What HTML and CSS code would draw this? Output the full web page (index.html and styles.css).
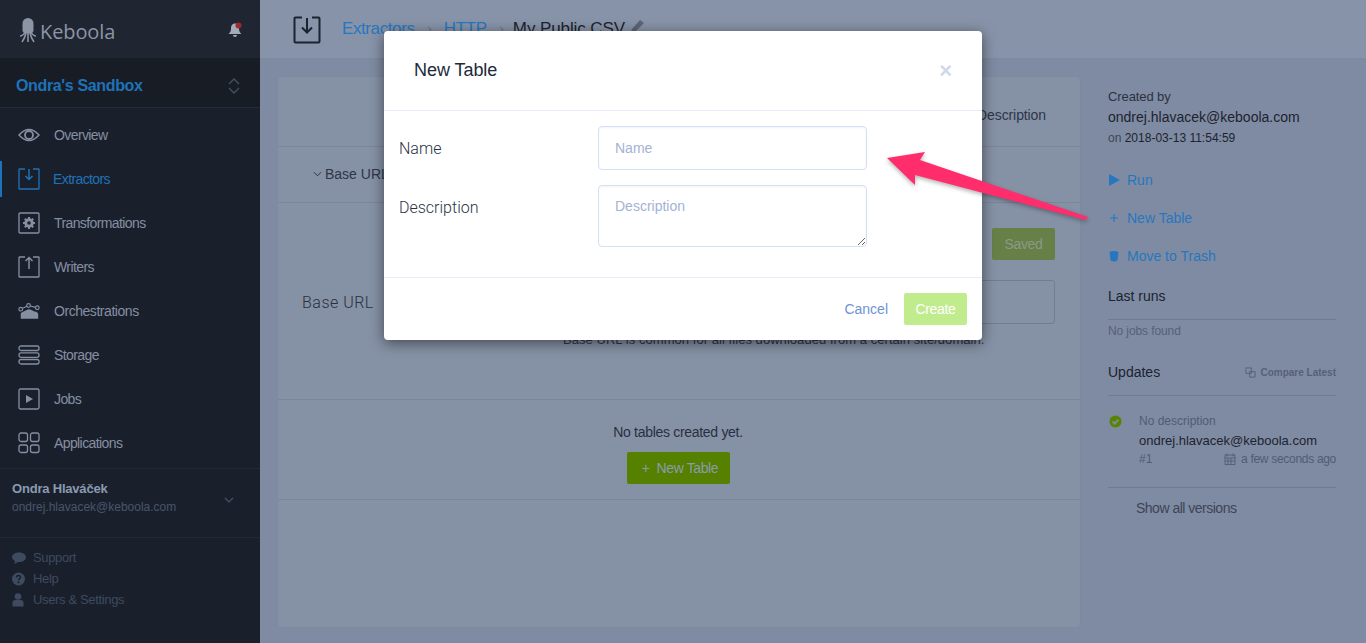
FILE: index.html
```html
<!DOCTYPE html>
<html>
<head>
    <title>My Public CSV - Keboola</title>
    <link rel="stylesheet" href="styles.css">
</head>
<body>
    <div class="page">
        <div class="sidebar">
            <div class="logo-row">
                <div class="logo">
                    <svg class="logo-icon" viewBox="0 0 18 26" width="18" height="26">
                        <path d="M3.500 5.500a5.500 5.500 0 0 1 11 0v7q0 3-5.500 3t-5.500-3z" fill="#8c95a5"/>
                        <path d="M6 14Q4 18 1 18M7 15Q6 20 3 24M9 15v9M11 15q1 5 4 9M12 14q2 4 5 4" stroke="#8c95a5" stroke-width="1.600" fill="none"/>
                    </svg>
                    <span>Keboola</span>
                </div>
                <svg class="bell" viewBox="0 0 16 16" width="16" height="16">
                    <path d="M8 1.500c3 0 4 2.500 4 5 0 3 1 4 2.500 5.500H1.500C3 10.500 4 9.500 4 6.500c0-2.500 1-5 4-5zM6 13h4a2 2 0 0 1-4 0z" fill="#a3abb8"/>
                    <circle cx="11.500" cy="3.500" r="3" fill="#9c2a35"/>
                </svg>
            </div>
            <div class="project">
                <span>Ondra's Sandbox</span>
                <svg viewBox="0 0 12 16" width="12" height="16"><path d="M1 6l5-5 5 5M1 10l5 5 5-5" stroke="#465164" stroke-width="1.300" fill="none"/></svg>
            </div>
            <div class="nav">
                <div class="nav-item">
                    <svg viewBox="0 0 22 22" width="22" height="22"><path d="M1 11q10-11 20 0-10 11-20 0z" stroke="currentColor" stroke-width="1.500" fill="none"/><circle cx="11" cy="11" r="4" fill="none" stroke="currentColor" stroke-width="1.800"/></svg>
                    <span>Overview</span>
                </div>
                <div class="nav-item active">
                    <svg viewBox="0 0 22 22" width="22" height="22"><path d="M7 1H1.500A.5.5 0 0 0 1 1.500v19a.5.5 0 0 0 .5.5h19a.5.5 0 0 0 .5-.5v-19a.5.5 0 0 0-.5-.5H15" stroke="currentColor" stroke-width="1.300" fill="none"/><path d="M11 1v10M7.500 8l3.500 3.500L14.500 8" stroke="currentColor" stroke-width="1.500" fill="none"/></svg>
                    <span>Extractors</span>
                </div>
                <div class="nav-item">
                    <svg viewBox="0 0 22 22" width="22" height="22"><rect x="1" y="1" width="20" height="20" rx="1" stroke="currentColor" stroke-width="1.300" fill="none"/><circle cx="11" cy="11" r="3.500" fill="none" stroke="currentColor" stroke-width="2.500"/><path d="M11 5v12M5 11h12M6.800 6.800l8.400 8.400M15.200 6.800l-8.400 8.400" stroke="currentColor" stroke-width="2"/><circle cx="11" cy="11" r="1.800" fill="#1a202b"/></svg>
                    <span>Transformations</span>
                </div>
                <div class="nav-item">
                    <svg viewBox="0 0 22 22" width="22" height="22"><path d="M7 1H1.500A.5.5 0 0 0 1 1.500v19a.5.5 0 0 0 .5.5h19a.5.5 0 0 0 .5-.5v-19a.5.5 0 0 0-.5-.5H15" stroke="currentColor" stroke-width="1.300" fill="none"/><path d="M11 13V2M7.500 5L11 1.500 14.500 5" stroke="currentColor" stroke-width="1.500" fill="none"/></svg>
                    <span>Writers</span>
                </div>
                <div class="nav-item">
                    <svg viewBox="0 0 24 22" width="24" height="22"><path d="M3 19.500v-5.500q0-1.500 2-2l5-2.500q2-1 4 0l4 2q4 .5 4 3v5z" fill="currentColor"/><circle cx="3" cy="9" r="2" fill="#1a202b" stroke="currentColor" stroke-width="1.300"/><circle cx="11.500" cy="5" r="2" fill="#1a202b" stroke="currentColor" stroke-width="1.300"/><circle cx="21" cy="7.500" r="2" fill="#1a202b" stroke="currentColor" stroke-width="1.300"/><path d="M5 8l4.800-2.200M13.500 5.500L19 7" stroke="currentColor" stroke-width="1.300"/></svg>
                    <span class="nav-wide">Orchestrations</span>
                </div>
                <div class="nav-item">
                    <svg viewBox="0 0 22 22" width="22" height="22"><rect x="1" y="2" width="20" height="4.500" rx="2" stroke="currentColor" stroke-width="1.300" fill="none"/><rect x="1" y="8.800" width="20" height="4.500" rx="2" stroke="currentColor" stroke-width="1.300" fill="none"/><rect x="1" y="15.500" width="20" height="4.500" rx="2" stroke="currentColor" stroke-width="1.300" fill="none"/></svg>
                    <span>Storage</span>
                </div>
                <div class="nav-item">
                    <svg viewBox="0 0 22 22" width="22" height="22"><rect x="1" y="1" width="20" height="20" rx="1.500" stroke="currentColor" stroke-width="1.300" fill="none"/><path d="M8 7l7 4-7 4z" fill="currentColor"/></svg>
                    <span>Jobs</span>
                </div>
                <div class="nav-item">
                    <svg viewBox="0 0 22 22" width="22" height="22"><rect x="1" y="1" width="8.500" height="8.500" rx="2" stroke="currentColor" stroke-width="1.300" fill="none"/><rect x="12.500" y="1" width="8.500" height="8.500" rx="2" stroke="currentColor" stroke-width="1.300" fill="none"/><rect x="1" y="13" width="8.500" height="7.500" rx="2" stroke="currentColor" stroke-width="1.300" fill="none"/><rect x="12.500" y="13" width="8.500" height="7.500" rx="2" stroke="currentColor" stroke-width="1.300" fill="none"/></svg>
                    <span>Applications</span>
                </div>
            </div>
            <div class="user">
                <div>
                    <div class="user-name">Ondra Hlaváček</div>
                    <div class="user-mail">ondrej.hlavacek@keboola.com</div>
                </div>
                <svg viewBox="0 0 10 6" width="10" height="6"><path d="M1 1l4 4 4-4" stroke="#465164" stroke-width="1.200" fill="none"/></svg>
            </div>
            <div class="side-links">
                <div class="side-link">
                    <svg viewBox="0 0 14 14" width="14" height="14"><path d="M7 1.500c3.700 0 7 2 7 4.700s-3.300 4.800-7 4.800h-1c-1.500 1.300-3 1.600-4.500 1.700 1-.8 1.500-1.700 1.500-2.800C1.200 9 0 7.700 0 6.200 0 3.500 3.300 1.500 7 1.500z" fill="currentColor"/></svg>
                    <span>Support</span>
                </div>
                <div class="side-link">
                    <svg viewBox="0 0 14 14" width="14" height="14"><circle cx="6.500" cy="7" r="6.500" fill="currentColor"/><path d="M4.500 5.500q0-2 2-2t2 1.800q0 1-1 1.500t-1 1.400" stroke="#1a202b" stroke-width="1.500" fill="none"/><rect x="5.700" y="9.500" width="1.700" height="1.700" fill="#1a202b"/></svg>
                    <span>Help</span>
                </div>
                <div class="side-link">
                    <svg viewBox="0 0 14 14" width="14" height="14"><circle cx="6" cy="3.500" r="3.300" fill="currentColor"/><path d="M0.500 13.500V10q0-3 3-3h5q3 0 3 3v3.500z" fill="currentColor"/></svg>
                    <span>Users &amp; Settings</span>
                </div>
            </div>
        </div>

        <div class="content">
            <div class="topbar">
                <svg class="top-icon" viewBox="0 0 28 28" width="28" height="28"><path d="M9 1.500H2.500a1 1 0 0 0-1 1v23a1 1 0 0 0 1 1h23a1 1 0 0 0 1-1v-23a1 1 0 0 0-1-1H19" stroke="#1c2330" stroke-width="2" fill="none"/><path d="M14 2v14M9 11.500l5 5 5-5" stroke="#1c2330" stroke-width="2" fill="none"/></svg>
                <div class="crumbs">
                    <span class="crumb-link">Extractors</span>
                    <span class="crumb-sep">›</span>
                    <span class="crumb-link">HTTP</span>
                    <span class="crumb-sep">›</span>
                    <span class="crumb-name">My Public CSV</span>
                    <svg viewBox="0 0 14 14" width="14" height="14"><path d="M0 14l1-4 8-9 4 3-9 9z" fill="#5b6577"/></svg>
                </div>
            </div>
            <div class="body">
                <div class="card">
                    <div class="card-tabs">
                        <span>Description</span>
                    </div>
                    <div class="card-head">
                        <svg viewBox="0 0 10 6" width="9" height="6"><path d="M1 1l4 4 4-4" stroke="#2a3242" stroke-width="1.100" fill="none"/></svg>
                        <span>Base URL</span>
                    </div>
                    <div class="card-form">
                        <div class="save-row"><span class="btn-saved">Saved</span></div>
                        <div class="url-row">
                            <label>Base URL</label>
                            <div class="url-input"></div>
                        </div>
                        <p class="url-help">Base URL is common for all files downloaded from a certain site/domain.</p>
                    </div>
                    <div class="card-tables">
                        <p>No tables created yet.</p>
                        <span class="btn-new">+&nbsp; New Table</span>
                    </div>
                </div>
                <div class="aside">
                    <div class="created">
                        <div class="created-label">Created by</div>
                        <div class="created-mail">ondrej.hlavacek@keboola.com</div>
                        <div class="created-date"><span>on</span> 2018-03-13 11:54:59</div>
                    </div>
                    <div class="actions">
                        <div class="action">
                            <svg viewBox="0 0 12 12" width="12" height="12"><path d="M1 0l11 6-11 6z" fill="currentColor"/></svg>
                            <span>Run</span>
                        </div>
                        <div class="action">
                            <svg viewBox="0 0 12 12" width="12" height="12"><path d="M6 2v8M2 6h8" stroke="currentColor" stroke-width="1.100"/></svg>
                            <span>New Table</span>
                        </div>
                        <div class="action">
                            <svg viewBox="0 0 12 12" width="12" height="12"><path d="M1.500 2q4.500-2 9 0l-1 8.500q-3.500 2-7 0z" fill="currentColor"/></svg>
                            <span>Move to Trash</span>
                        </div>
                    </div>
                    <div class="aside-title runs">Last runs</div>
                    <div class="no-jobs">No jobs found</div>
                    <div class="aside-title updates">
                        <span>Updates</span>
                        <span class="compare">
                            <svg viewBox="0 0 12 12" width="11" height="11"><path d="M1 1h6v6H1zM5 5h6v6H5z" stroke="currentColor" fill="none"/></svg>
                            Compare Latest
                        </span>
                    </div>
                    <div class="version">
                        <svg viewBox="0 0 14 14" width="13" height="13"><circle cx="7" cy="7" r="6.500" fill="#588500"/><path d="M3.800 7l2.300 2.300 4-4.200" stroke="#7f8ba2" stroke-width="2" fill="none"/></svg>
                        <div class="version-info">
                            <div class="version-desc">No description</div>
                            <div class="version-mail">ondrej.hlavacek@keboola.com</div>
                            <div class="version-meta">
                                <span>#1</span>
                                <span class="version-time">
                                    <svg viewBox="0 0 12 12" width="12" height="12"><path d="M1 2h10v9.500H1zM1 5h10M3 0.500v3M9 0.500v3M4 5v6M7 5v6M1 8h10" stroke="#55617a" fill="none"/></svg>
                                    a few seconds ago
                                </span>
                            </div>
                        </div>
                    </div>
                    <div class="show-all">Show all versions</div>
                </div>
            </div>
        </div>
    </div>

    <div class="modal">
        <div class="modal-head">
            <span class="modal-title">New Table</span>
            <span class="modal-close">×</span>
        </div>
        <div class="modal-body">
            <div class="field">
                <label>Name</label>
                <input class="input" placeholder="Name">
            </div>
            <div class="field">
                <label>Description</label>
                <textarea class="input area" placeholder="Description"></textarea>
            </div>
        </div>
        <div class="modal-foot">
            <span class="btn-cancel">Cancel</span>
            <span class="btn-create">Create</span>
        </div>
    </div>

    <svg class="arrow" viewBox="0 0 210 75" width="210" height="75">
        <path d="M1 12L39 6 34 14 202 71 200 74 29 29 29 39z" fill="#ff2d6b"/>
    </svg>
</body>
</html>
```

FILE: styles.css
```css
* {
    box-sizing: border-box;
}
html, body {
    height: 100%;
    overflow: hidden;
}
body {
    margin: 0;
    font-family: "Liberation Sans", Arial, sans-serif;
    font-size: 14px;
    color: #1c2330;
    background-color: #7f8ba2;
}
p {
    margin: 0;
}
.page {
    display: flex;
    height: 643px;
}

/* sidebar */
.sidebar {
    width: 260px;
    flex: none;
    background-color: #1a202b;
    color: #858fa2;
}
.logo-row {
    height: 58px;
    padding: 4px 17px 0 19px;
    display: flex;
    align-items: center;
    justify-content: space-between;
    background-color: #1f2531;
}
.logo {
    display: flex;
    align-items: center;
    gap: 3px;
    font-family: "Open Sans", sans-serif;
    font-size: 20px;
    color: #8c95a5;
    letter-spacing: -0.1px;
}
.bell {
    margin-top: -3px;
}
.project {
    height: 50px;
    padding: 7px 20px 0 16px;
    display: flex;
    align-items: center;
    justify-content: space-between;
    background-color: #171c25;
    border-bottom: 1px solid #242b38;
    font-size: 16px;
    font-weight: bold;
    color: #1f72b8;
    letter-spacing: -0.35px;
}
.nav {
    padding: 5px 0 3px;
    border-bottom: 1px solid #222834;
}
.nav-item {
    height: 44px;
    padding-left: 18px;
    display: flex;
    align-items: center;
    gap: 14px;
    font-size: 14px;
    letter-spacing: -0.6px;
}
.nav-item svg {
    width: 22px;
    flex: none;
}
.nav-wide {
    letter-spacing: -0.45px;
}
.nav-item.active {
    color: #1f72b8;
    border-left: 2px solid #1f72b8;
    padding-left: 16px;
    gap: 13px;
    height: 36px;
    margin: 4px 0;
}
.user {
    height: 69px;
    padding: 11px 26px 0 12px;
    display: flex;
    justify-content: space-between;
    align-items: flex-start;
    border-bottom: 1px solid #222834;
}
.user svg {
    margin-top: 17px;
}
.user-name {
    font-size: 13px;
    font-weight: bold;
    color: #8a9ab2;
    letter-spacing: -0.2px;
    line-height: 17px;
}
.user-mail {
    margin-top: 2px;
    font-size: 12px;
    color: #46566e;
    line-height: 17px;
}
.side-links {
    padding: 9px 12px;
    color: #3d4a5f;
}
.side-link {
    height: 21px;
    display: flex;
    align-items: center;
    gap: 7px;
    font-size: 13px;
    letter-spacing: -0.35px;
}

/* top bar and content */
.content {
    flex: 1;
    min-width: 0;
    display: flex;
    flex-direction: column;
}
.topbar {
    height: 60px;
    flex: none;
    padding: 0 0 0 33px;
    display: flex;
    align-items: center;
    gap: 21px;
    background-color: #8793a8;
    border-bottom: 2px solid #7e8aa0;
}
.top-icon {
    margin-top: 2px;
}
.crumbs {
    display: flex;
    align-items: center;
    gap: 12px;
    font-size: 17px;
    letter-spacing: -0.4px;
    color: #1c2330;
}
.crumb-link {
    color: #2677bf;
}
.crumb-sep {
    color: #6d7a90;
}
.crumb-name {
    margin-left: -3px;
    letter-spacing: -0.1px;
}
.crumbs svg {
    margin-left: -6px;
    margin-top: -6px;
}
.body {
    flex: 1;
    display: flex;
    padding: 16px 30px 15px 17px;
    gap: 27px;
    min-height: 0;
}
.card {
    width: 804px;
    flex: none;
    background-color: #8591a5;
    border: 1px solid #7d899e;
    border-radius: 4px;
}
.card-tabs {
    height: 70px;
    padding: 6px 34px 0 0;
    display: flex;
    align-items: center;
    justify-content: flex-end;
    color: #2d3648;
    border-bottom: 1px solid #7a8699;
    letter-spacing: -0.1px;
}
.card-head {
    height: 56px;
    padding: 0 0 2px 35px;
    display: flex;
    align-items: center;
    gap: 3px;
    color: #2d3648;
    border-bottom: 1px solid #7a8699;
}
.card-form {
    height: 197px;
    border-bottom: 1px solid #7a8699;
    padding: 25px 25px 0 24px;
}
.save-row {
    display: flex;
    justify-content: flex-end;
}
.btn-saved {
    width: 63px;
    height: 32px;
    display: flex;
    align-items: center;
    justify-content: center;
    background-color: #668047;
    color: #8a9a88;
    border-radius: 2px;
    letter-spacing: -0.3px;
}
.url-row {
    margin-top: 20px;
    display: flex;
    align-items: center;
    justify-content: space-between;
}
.url-row label {
    padding-top: 1px;
    font-family: Roboto, "Liberation Sans", sans-serif;
    font-weight: 300;
    font-size: 16px;
    letter-spacing: 0.5px;
    color: #283040;
}
.url-input {
    width: 500px;
    height: 44px;
    border: 1px solid #6f7c92;
    border-radius: 3px;
}
.url-help {
    margin-top: 8px;
    padding-left: 261px;
    font-size: 13px;
    letter-spacing: 0.05px;
    color: #2d3648;
    white-space: nowrap;
}
.card-tables {
    height: 100px;
    padding: 24px 2px 0 0;
    border-bottom: 1px solid #7a8699;
    text-align: center;
}
.card-tables p {
    line-height: 16px;
    letter-spacing: -0.3px;
    color: #283040;
}
.btn-new {
    margin-top: 12px;
    padding-left: 4px;
    width: 103px;
    height: 32px;
    display: inline-flex;
    align-items: center;
    justify-content: center;
    background-color: #558000;
    color: #8a9cab;
    border-radius: 2px;
    letter-spacing: -0.4px;
}

/* right column */
.aside {
    flex: 1;
    min-width: 0;
}
.created {
    padding-top: 12px;
}
.created-label {
    font-size: 13px;
    line-height: 18px;
    color: #2a3242;
    letter-spacing: -0.1px;
}
.created-mail {
    margin-top: 1px;
    line-height: 20px;
    color: #1c2330;
}
.created-date {
    margin-top: 1px;
    font-size: 12px;
    line-height: 20px;
    color: #1c2330;
}
.created-date span {
    color: #3c4558;
}
.actions {
    margin-top: 13px;
}
.action {
    height: 38px;
    display: flex;
    align-items: center;
    gap: 7px;
    color: #2677bf;
}
.aside-title {
    margin-top: 10px;
    height: 34px;
    padding-bottom: 13px;
    display: flex;
    align-items: center;
    color: #1c2330;
    border-bottom: 1px solid #6d7a90;
}
.runs {
    height: 35px;
}
.no-jobs {
    margin-top: 3px;
    font-size: 12px;
    line-height: 16px;
    color: #55617a;
    letter-spacing: -0.1px;
}
.updates {
    margin-top: 23px;
    justify-content: space-between;
}
.compare {
    display: flex;
    align-items: center;
    gap: 4px;
    font-size: 10px;
    color: #55617a;
    font-weight: bold;
}
.version {
    margin-top: 19px;
    padding-bottom: 20px;
    display: flex;
    gap: 17px;
    border-bottom: 1px solid #6d7a90;
}
.version > svg {
    margin-left: 1px;
    flex: none;
}
.version-info {
    flex: 1;
    margin-top: -1px;
}
.version-desc {
    font-size: 12px;
    line-height: 15px;
    color: #505c74;
}
.version-mail {
    margin-top: 2px;
    font-size: 13px;
    line-height: 20px;
    color: #1c2330;
}
.version-meta {
    display: flex;
    justify-content: space-between;
    font-size: 12px;
    line-height: 16px;
    color: #505c74;
}
.version-time {
    display: flex;
    align-items: center;
    gap: 5px;
    letter-spacing: -0.3px;
}
.show-all {
    margin-top: 12px;
    padding-left: 28px;
    letter-spacing: -0.5px;
    color: #3c4558;
}

/* modal */
.modal {
    position: absolute;
    left: 384px;
    top: 31px;
    width: 598px;
    height: 309px;
    background-color: #fff;
    border-radius: 4px;
    box-shadow: 0 3px 14px rgba(0, 0, 0, 0.5);
}
.modal-head {
    height: 80px;
    padding: 0 30px;
    display: flex;
    align-items: center;
    justify-content: space-between;
    border-bottom: 1px solid #e6edf8;
}
.modal-title {
    font-size: 18px;
    color: #202a3c;
    letter-spacing: -0.05px;
}
.modal-close {
    font-size: 22px;
    font-weight: bold;
    color: #cfd9ec;
}
.modal-body {
    padding: 15px 115px 0 15px;
    height: 167px;
    border-bottom: 1px solid #e6edf8;
}
.field {
    display: flex;
    margin-bottom: 15px;
}
.field label {
    width: 199px;
    flex: none;
    padding-top: 13px;
    font-family: Roboto, "Liberation Sans", sans-serif;
    font-weight: 300;
    font-size: 16px;
    line-height: 20px;
    color: #2a3242;
}
.input {
    width: 269px;
    height: 44px;
    padding: 0 16px;
    border: 1px solid #d5e0f7;
    border-radius: 4px;
    box-shadow: inset 0 1px 2px rgba(200, 215, 240, 0.25);
    font-family: "Liberation Sans", Arial, sans-serif;
    font-size: 14px;
    outline: none;
}
.input::placeholder {
    color: #a4b2d4;
    opacity: 1;
}
.area {
    height: 62px;
    padding-top: 12px;
    display: block;
}
.modal-foot {
    height: 62px;
    padding: 0 15px;
    display: flex;
    align-items: center;
    justify-content: flex-end;
    gap: 16px;
}
.btn-cancel {
    color: #6f93d2;
}
.btn-create {
    width: 63px;
    height: 32px;
    display: flex;
    align-items: center;
    justify-content: center;
    background-color: #c1ec8d;
    color: #fff;
    border-radius: 2px;
    letter-spacing: -0.3px;
}

/* annotation over the screenshot */
.arrow {
    position: absolute;
    left: 886px;
    top: 146px;
    filter: drop-shadow(0 2px 2px rgba(0, 0, 0, 0.3));
}
```
